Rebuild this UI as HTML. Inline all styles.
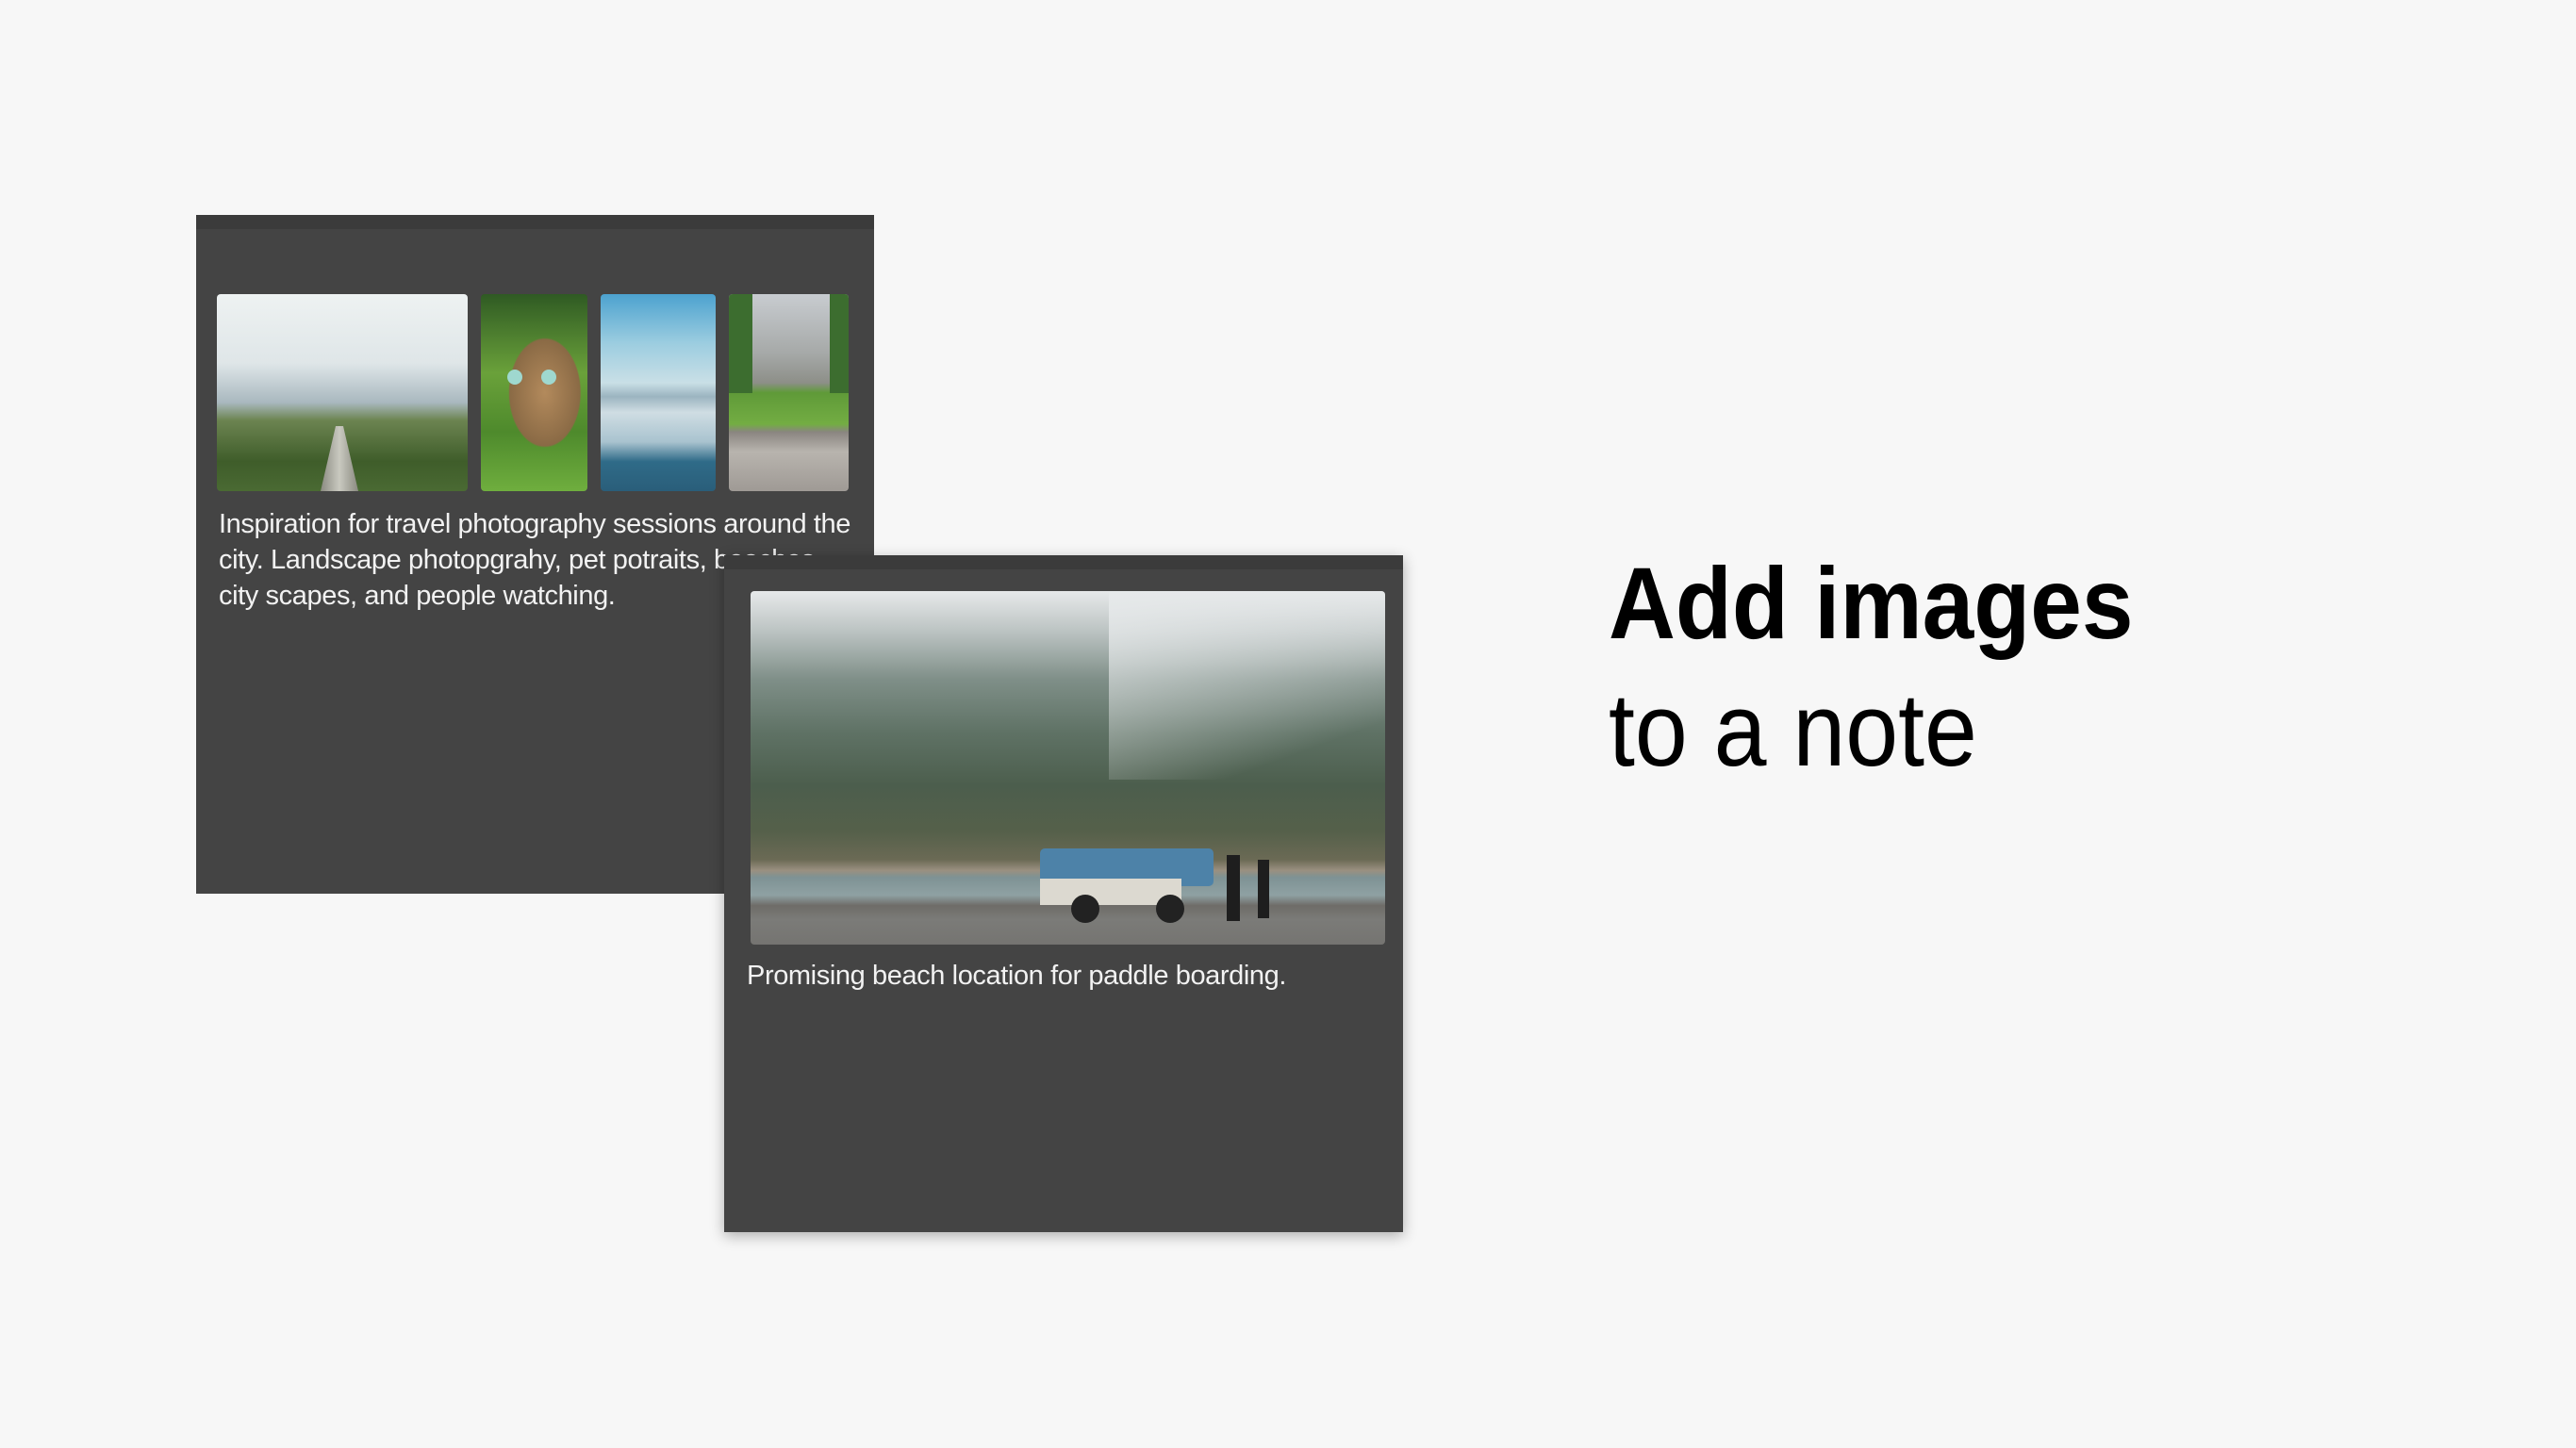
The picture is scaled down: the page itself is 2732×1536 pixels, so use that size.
<!DOCTYPE html>
<html><head><meta charset="utf-8"><style>
html,body{margin:0;padding:0}
body{width:2732px;height:1536px;background:#f7f7f7;position:relative;overflow:hidden;font-family:"Liberation Sans",sans-serif}
.card{position:absolute;background:#444;}
.hdr{position:absolute;left:0;top:0;right:0;height:15px;background:#3b3b3b}
.img{position:absolute;border-radius:4px;overflow:hidden}
.txt{position:absolute;color:#f2f2f2;font-size:29px;letter-spacing:-0.4px;line-height:38px;white-space:nowrap}
.t{position:absolute;color:#000;white-space:nowrap;transform-origin:0 0}
</style></head><body>

<div class="card" style="left:208px;top:228px;width:719px;height:720px">
  <div class="hdr"></div>
  <div class="img" style="left:22px;top:84px;width:266px;height:209px;background:linear-gradient(#eef2f2 0%,#dfe6e8 35%,#a9b8bf 55%,#6c8451 64%,#3f5d2a 85%,#4a6a33 100%)">
    <div style="position:absolute;left:110px;top:140px;width:40px;height:69px;background:linear-gradient(90deg,#8a8a80,#c9c9c0,#8a8a80);clip-path:polygon(40% 0,60% 0,100% 100%,0 100%)"></div>
  </div>
  <div class="img" style="left:302px;top:84px;width:113px;height:209px;background:radial-gradient(ellipse 55% 45% at 60% 50%,#b38a5c,#8a6a45 60%,transparent 62%),linear-gradient(#2f5a23,#6aa13a 40%,#4e8a2c 70%,#6fae3e)">
    <div style="position:absolute;left:28px;top:80px;width:16px;height:16px;border-radius:50%;background:#9fd8cf"></div>
    <div style="position:absolute;left:64px;top:80px;width:16px;height:16px;border-radius:50%;background:#9fd8cf"></div>
  </div>
  <div class="img" style="left:429px;top:84px;width:122px;height:209px;background:linear-gradient(#4ca2cf 0%,#9ccde0 25%,#c9dfe6 45%,#9bb4c0 52%,#cfdde3 60%,#a9c3cf 75%,#2f6b88 85%,#2a5e7a 100%)"></div>
  <div class="img" style="left:565px;top:84px;width:127px;height:209px;background:linear-gradient(#c8ccd0 0%,#a6a9a8 30%,#8d8f88 45%,#5f9a38 50%,#73ad43 66%,#8a8580 70%,#b8b4ae 80%,#9f9a95 100%)">
    <div style="position:absolute;left:0;top:0;width:25px;height:105px;background:#3c6d2f"></div>
    <div style="position:absolute;right:0;top:0;width:20px;height:105px;background:#3c6d2f"></div>
  </div>
  <div class="txt" style="left:24px;top:309px">Inspiration for travel photography sessions around the<br>city. Landscape photopgrahy, pet potraits, beaches,<br>city scapes, and people watching.</div>
</div>

<div class="card" style="left:768px;top:589px;width:720px;height:718px;box-shadow:0 4px 14px rgba(0,0,0,0.3)">
  <div class="hdr"></div>
  <div class="img" style="left:28px;top:38px;width:673px;height:375px;background:linear-gradient(#e7e9ea 0%,#b9c1c0 12%,#7f8f88 25%,#5f7265 40%,#4c5e4d 55%,#55604a 68%,#6b6a55 76%,#9a9080 79%,#7e9294 81%,#8fa1a3 86%,#6e6c68 89%,#7b7b78 93%,#757471 100%)">
    <div style="position:absolute;left:380px;top:0;width:293px;height:200px;background:linear-gradient(160deg,rgba(230,233,234,.95),rgba(230,233,234,0) 80%)"></div>
    <div style="position:absolute;left:307px;top:273px;width:184px;height:40px;background:#4d82a8;border-radius:5px"></div>
    <div style="position:absolute;left:307px;top:305px;width:150px;height:28px;background:#dcd9d0"></div>
    <div style="position:absolute;left:340px;top:322px;width:30px;height:30px;border-radius:50%;background:#222"></div>
    <div style="position:absolute;left:430px;top:322px;width:30px;height:30px;border-radius:50%;background:#222"></div>
    <div style="position:absolute;left:505px;top:280px;width:14px;height:70px;background:#1e1e1e"></div>
    <div style="position:absolute;left:538px;top:285px;width:12px;height:62px;background:#1e1e1e"></div>
  </div>
  <div class="txt" style="left:24px;top:427px">Promising beach location for paddle boarding.</div>
</div>

<div class="t" style="left:1706px;top:570px;font-size:108px;font-weight:bold;line-height:140px;transform:scaleX(0.909)">Add images</div>
<div class="t" style="left:1706px;top:705px;font-size:110px;line-height:140px;transform:scaleX(0.913)">to a note</div>
</body></html>
